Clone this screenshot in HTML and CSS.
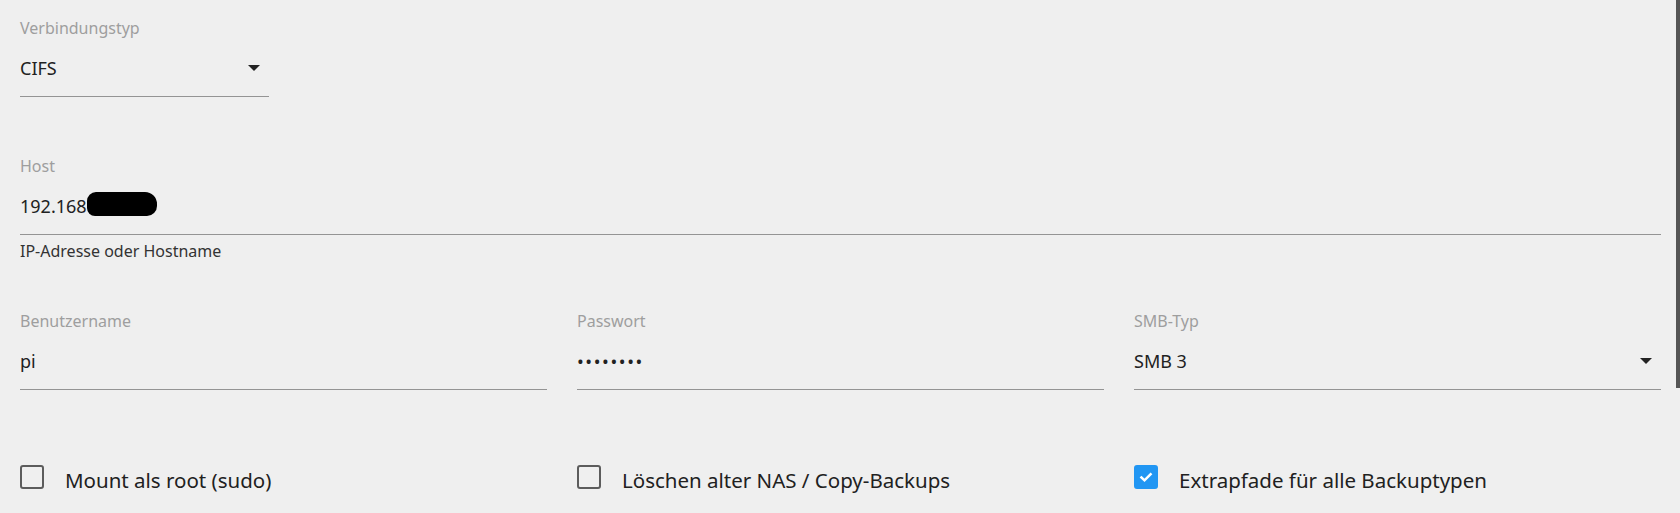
FILE: index.html
```html
<!DOCTYPE html>
<html lang="de">
<head>
<meta charset="utf-8">
<title>Verbindung</title>
<link rel="stylesheet" href="styles.css">
</head>
<body>
<div class="scrollbar"></div>
<main class="form">
  <div class="field field-type">
    <div class="label">Verbindungstyp</div>
    <div class="control">
      <span class="value">CIFS</span>
      <span class="caret"></span>
    </div>
  </div>

  <div class="field field-host">
    <div class="label">Host</div>
    <div class="control">
      <span class="value">192.168<span class="redact"></span></span>
    </div>
    <div class="hint">IP-Adresse oder Hostname</div>
  </div>

  <div class="grid row-creds">
    <div class="field">
      <div class="label">Benutzername</div>
      <div class="control"><span class="value">pi</span></div>
    </div>
    <div class="field">
      <div class="label">Passwort</div>
      <div class="control"><span class="value dots">••••••••</span></div>
    </div>
    <div class="field">
      <div class="label">SMB-Typ</div>
      <div class="control">
        <span class="value">SMB 3</span>
        <span class="caret"></span>
      </div>
    </div>
  </div>

  <div class="grid row-checks">
    <label class="check">
      <span class="box"></span>
      <span class="check-text">Mount als root (sudo)</span>
    </label>
    <label class="check">
      <span class="box"></span>
      <span class="check-text">Löschen alter NAS / Copy-Backups</span>
    </label>
    <label class="check">
      <span class="box box-on">
        <svg viewBox="0 0 24 24" width="24" height="24"><polyline points="6.5,12.5 10.2,16 17.5,8.7" fill="none" stroke="#ffffff" stroke-width="3" stroke-linecap="square"/></svg>
      </span>
      <span class="check-text">Extrapfade für alle Backuptypen</span>
    </label>
  </div>
</main>
</body>
</html>
```

FILE: styles.css
```css
html, body {
  margin: 0;
  padding: 0;
  background: #efefef;
  height: 100%;
  overflow: hidden;
}

body {
  font-family: "Noto Sans", "Open Sans", sans-serif;
  color: #212121;
}

.scrollbar {
  position: fixed;
  top: 0;
  right: 0;
  width: 4px;
  height: 388px;
  background: #555555;
}

.form {
  padding: 18px 19px 0 20px;
  display: flex;
  flex-direction: column;
}

.field {
  display: flex;
  flex-direction: column;
}

.field-type {
  width: 249px;
}

.field-host {
  margin-top: 59px;
}

.label {
  font-size: 16px;
  line-height: 20px;
  color: #9e9e9e;
}

.control {
  display: flex;
  align-items: center;
  justify-content: space-between;
  padding: 18px 0 16px 0;
  border-bottom: 1px solid #949494;
}

.value {
  font-size: 18px;
  line-height: 24px;
  color: #212121;
  white-space: nowrap;
}

.dots {
  letter-spacing: 1.6px;
  font-size: 18px;
}

.caret {
  width: 0;
  height: 0;
  border-left: 6.5px solid transparent;
  border-right: 6.5px solid transparent;
  border-top: 6.5px solid #222222;
  margin-right: 9px;
}

.redact {
  display: inline-block;
  width: 70px;
  height: 24px;
  margin-top: -3px;
  background: #000000;
  border-radius: 9px 12px 10px 8px;
  vertical-align: -3px;
}

.hint {
  margin-top: 6px;
  font-size: 16px;
  line-height: 20px;
  color: #333333;
}

.grid {
  display: grid;
  grid-template-columns: repeat(3, 1fr);
  column-gap: 30px;
}

.row-creds {
  margin-top: 50px;
}

.row-checks {
  margin-top: 75px;
}

.check {
  display: flex;
  align-items: flex-start;
  gap: 21px;
}

.box {
  box-sizing: border-box;
  width: 24px;
  height: 24px;
  border: 2.5px solid #5c5c5c;
  border-radius: 3px;
  flex: none;
  display: flex;
  align-items: center;
  justify-content: center;
}

.box-on {
  background: #2196f3;
  border-color: #2196f3;
}

.check-text {
  font-size: 20.5px;
  line-height: 24px;
  margin-top: 3px;
  color: #212121;
  white-space: nowrap;
}
```
